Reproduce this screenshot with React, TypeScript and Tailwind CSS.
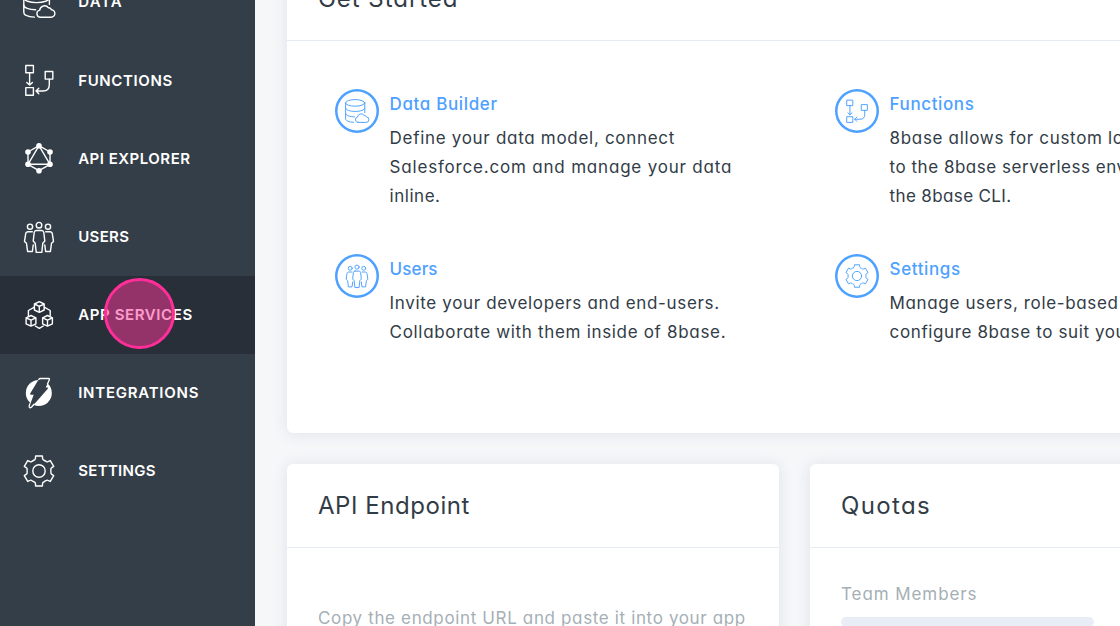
import type { ReactNode } from "react";

type IconProps = { className?: string; stroke?: number };

function Glyph({ className, stroke = 1.5, children }: IconProps & { children: ReactNode }) {
  return (
    <svg
      viewBox="0 0 32 32"
      fill="none"
      stroke="currentColor"
      strokeWidth={stroke}
      strokeLinecap="round"
      strokeLinejoin="round"
      className={`shrink-0 overflow-visible ${className ?? ""}`}
    >
      {children}
    </svg>
  );
}

function DataIcon(props: IconProps) {
  return (
    <Glyph {...props}>
      <ellipse cx="13.6" cy="5.2" rx="12.8" ry="4.4" />
      <path d="M.8 5.2v21.3c0 2.4 4.3 4.2 10.6 4.6M26.4 5.2v13.2" />
      <path d="M.8 12c0 2.5 5.7 4.6 12.8 4.6S26.4 14.5 26.4 12" />
      <path d="M.8 19.2c0 2.5 5.2 4.5 11.8 4.6" />
      <path d="M17.600 31.200h10.300a3.700 3.700 0 0 0 .5-7.400 2.700 2.700 0 0 0-2.900-2 4.900 4.900 0 0 0-8.800 2.300 3.600 3.600 0 0 0 .9 7.100Z" />
    </Glyph>
  );
}

function FunctionsIcon(props: IconProps) {
  return (
    <Glyph {...props}>
      <path d="M2.800 1.500h7.600v7.300H2.800zM22.200 7.500h7.600v7.600h-7.600zM2.800 23.600h7.600v7.600H2.800z" />
      <path d="M6.600 9v12M3.800 18.400l2.800 2.700 2.800-2.700" />
      <path d="M26.300 15.200v5.600c0 4-2 6.200-6.300 6.200h-7M15.800 24.200 13 27l2.800 2.800" />
    </Glyph>
  );
}

function ApiIcon(props: IconProps) {
  const nodes = [
    [16, 3.7],
    [27, 10],
    [27, 22.3],
    [16, 28.7],
    [5, 22.3],
    [5, 10],
  ];
  return (
    <Glyph {...props}>
      <path d="M16 3.700 27 10v12.300l-11 6.400-11-6.400V10ZM16 3.700l11 18.600H5Z" />
      {nodes.map(([x, y]) => (
        <circle key={`${x}-${y}`} cx={x} cy={y} r="2.8" fill="currentColor" stroke="none" />
      ))}
    </Glyph>
  );
}

function UsersIcon(props: IconProps) {
  return (
    <Glyph {...props}>
      <circle cx="16" cy="4.2" r="2.8" />
      <circle cx="7" cy="5.7" r="2.6" />
      <circle cx="25" cy="5.7" r="2.6" />
      <path d="M13.400 9.500h5.200c1.400 0 2 .8 2.200 2l1 8.500-2 2.200-1 9.200h-5.600l-1-9.200-2-2.200 1-8.500c.2-1.200.8-2 2.200-2Z" />
      <path d="M9.300 10.700H5.200c-1.600 0-2.300.8-2.500 2L1.500 20.400l2 1.900 1.100 8.200h4.800l.8-6.500" />
      <path d="M22.700 10.700h4.100c1.600 0 2.300.8 2.500 2l1.200 7.700-2 1.900-1.100 8.200h-4.800l-.8-6.500" />
    </Glyph>
  );
}

function Cube({ x, y }: { x: number; y: number }) {
  return (
    <path
      transform={`translate(${x} ${y})`}
      d="M0-5.300 4.900-3v6L0 5.300-4.900 3v-6ZM-4.900-3 0-.7 4.900-3M0-.7v6"
    />
  );
}

function AppServicesIcon(props: IconProps) {
  return (
    <Glyph {...props}>
      <Cube x={16.3} y={8} />
      <Cube x={8} y={21.8} />
      <Cube x={24.5} y={21.8} />
      <path d="m11.400 8.200-6 3.300v5M21.200 8.200l6 3.300v5M12.300 27l4 2.400 4-2.400" />
    </Glyph>
  );
}

function IntegrationsIcon(props: IconProps) {
  return (
    <Glyph {...props}>
      <circle cx="15.8" cy="16" r="13" fill="currentColor" stroke="none" />
      <path
        d="M17.300 1.600h8.400c.7 0 .9.5.7 1l-3.700 7.900h1.500c.8 0 1 .6.6 1.200L8.300 30.400c-.8 1-2.200.4-1.900-.8L10.700 17.800H8c-.8 0-1.100-.5-.8-1.200L15.600 2.600c.4-.7.900-1 1.700-1Z"
        className="fill-[#343e48]"
        stroke="none"
      />
      <path
        d="M15.700 2.500c.4-.6.900-1 1.600-1h8.500c.6 0 .8.5.6 1l-1.900 4.500M6.900 26.600 6.200 29c-.4 1.500 1.300 2.300 2.200 1.200l2.600-3"
        strokeWidth="1.3"
      />
    </Glyph>
  );
}

const gearTeeth = Array.from({ length: 6 }, (_, i) => {
  const a = (i * Math.PI) / 3;
  const at = (x: number, y: number) =>
    `${(16 + x * Math.cos(a) - y * Math.sin(a)).toFixed(2)} ${(16 + x * Math.sin(a) + y * Math.cos(a)).toFixed(2)}`;
  return `${i ? "L" : "M"}${at(-4.4, -11.2)}Q${at(-3.6, -11.6)} ${at(-3.6, -12.4)}L${at(-3.4, -15)}L${at(3.4, -15)}L${at(3.6, -12.4)}Q${at(3.6, -11.6)} ${at(4.4, -11.2)}Q${at(5.9, -10.2)} ${at(7.3, -9.6)}`;
}).join("");

function SettingsIcon(props: IconProps) {
  return (
    <Glyph {...props}>
      <path d={`${gearTeeth}Z`} />
      <circle cx="16" cy="16" r="6.2" />
    </Glyph>
  );
}

type IconType = (props: IconProps) => ReactNode;

const nav: { label: string; icon: IconType; spacing: string; active?: boolean }[] = [
  { label: "DATA", icon: DataIcon, spacing: "tracking-[1.4px]" },
  { label: "FUNCTIONS", icon: FunctionsIcon, spacing: "tracking-[0.63px]" },
  { label: "API EXPLORER", icon: ApiIcon, spacing: "tracking-[0.5px]" },
  { label: "USERS", icon: UsersIcon, spacing: "tracking-[0.34px]" },
  { label: "APP SERVICES", icon: AppServicesIcon, spacing: "tracking-[0.6px]", active: true },
  { label: "INTEGRATIONS", icon: IntegrationsIcon, spacing: "tracking-[0.76px]" },
  { label: "SETTINGS", icon: SettingsIcon, spacing: "tracking-[0.32px]" },
];

function Sidebar() {
  return (
    <aside className="h-full w-[255.4px] shrink-0 overflow-hidden bg-[#343e48]">
      <nav className="-mt-[37px] flex flex-col">
        {nav.map(({ label, icon: Icon, spacing, active }) => (
          <a
            key={label}
            className={`relative flex h-[78.2px] shrink-0 items-center gap-[23.2px] pl-[23px] text-[15px] font-semibold text-white ${
              active ? "bg-[#282f39]" : ""
            }`}
          >
            <Icon className="size-8" stroke={1.4} />
            <span className={`pt-px whitespace-nowrap ${spacing}`}>{label}</span>
            {active && (
              <span className="absolute top-[2px] left-[103.5px] size-[71px] rounded-full border-[3px] border-[#ff2e98] bg-[#ff3799]/50" />
            )}
          </a>
        ))}
      </nav>
    </aside>
  );
}

type Line = [text: string, spacing: string];

const features: { title: Line; icon: IconType; lines: Line[] }[] = [
  {
    title: ["Data Builder", "tracking-[0.63px]"],
    icon: DataIcon,
    lines: [
      ["Define your data model, connect", "tracking-[0.70px]"],
      ["Salesforce.com and manage your data", "tracking-[0.81px]"],
      ["inline.", "tracking-[0.53px]"],
    ],
  },
  {
    title: ["Functions", "tracking-[0.6px]"],
    icon: FunctionsIcon,
    lines: [
      ["8base allows for custom logic", "tracking-[0.67px]"],
      ["to the 8base serverless environment", "tracking-[0.52px]"],
      ["the 8base CLI.", "tracking-[0.37px]"],
    ],
  },
  {
    title: ["Users", "tracking-[0.12px]"],
    icon: UsersIcon,
    lines: [
      ["Invite your developers and end-users.", "tracking-[0.66px]"],
      ["Collaborate with them inside of 8base.", "tracking-[0.68px]"],
    ],
  },
  {
    title: ["Settings", "tracking-[0.62px]"],
    icon: SettingsIcon,
    lines: [
      ["Manage users, role-based access", "tracking-[0.64px]"],
      ["configure 8base to suit your needs.", "tracking-[0.62px]"],
    ],
  },
];

function Card({ title, spacing, className, children }: { title: string; spacing: string; className: string; children: ReactNode }) {
  return (
    <section className={`shrink-0 rounded-[6px] bg-white shadow-[0_1px_16px_rgba(50,60,100,0.11)] ${className}`}>
      <h2 className={`flex h-[83.5px] items-center border-b border-[#e6ebf2] px-[31px] pt-px text-[24px] text-[#323c47] ${spacing}`}>
        {title}
      </h2>
      {children}
    </section>
  );
}

export default function App() {
  return (
    <div className="flex h-[626px] w-[1120px] overflow-hidden bg-[#f5f7f9] font-['Inter',sans-serif] [font-feature-settings:'cv11']">
      <Sidebar />
      <main className="-mt-[42.5px] flex flex-col gap-[31px] pl-[31.6px]">
        <Card title="Get Started" spacing="tracking-[0.96px]" className="h-[475.5px] w-[1015px]">
          <div className="grid grid-cols-[500px_500px] pt-[48px] pl-[48px]">
            {features.map(({ title, icon: Icon, lines }) => (
              <article key={title[0]} className="flex h-[165px] gap-[10.6px]">
                <div className="flex size-[44px] shrink-0 items-center justify-center rounded-full text-[#4da1ff] shadow-[inset_0_0_0_2.5px_#4da1ff]">
                  <Icon className="size-6" stroke={1.3} />
                </div>
                <div className="pt-[0.5px] whitespace-nowrap">
                  <h3 className={`text-[17px] leading-[29px] font-medium text-[#4da1ff] ${title[1]}`}>{title[0]}</h3>
                  <div className="mt-[5px] text-[17px] leading-[29px] text-[#323c47]">
                    {lines.map(([text, spacing]) => (
                      <p key={text} className={spacing}>
                        {text}
                      </p>
                    ))}
                  </div>
                </div>
              </article>
            ))}
          </div>
        </Card>
        <div className="flex gap-[31px]">
          <Card title="API Endpoint" spacing="tracking-[0.56px]" className="h-[300px] w-[492px]">
            <p className="px-[31px] pt-[56.5px] text-[17px] leading-[29px] tracking-[0.64px] whitespace-nowrap text-[#a5afb5]">
              Copy the endpoint URL and paste it into your app
            </p>
          </Card>
          <Card title="Quotas" spacing="tracking-[1.35px]" className="h-[300px] w-[492px]">
            <div className="px-[31px] pt-[32.5px]">
              <p className="text-[17px] leading-[29px] tracking-[0.92px] text-[#a5afb5]">Team Members</p>
              <div className="mt-[8px] h-[10px] w-[253px] rounded-full bg-[#e9eef6]" />
            </div>
          </Card>
        </div>
      </main>
    </div>
  );
}
